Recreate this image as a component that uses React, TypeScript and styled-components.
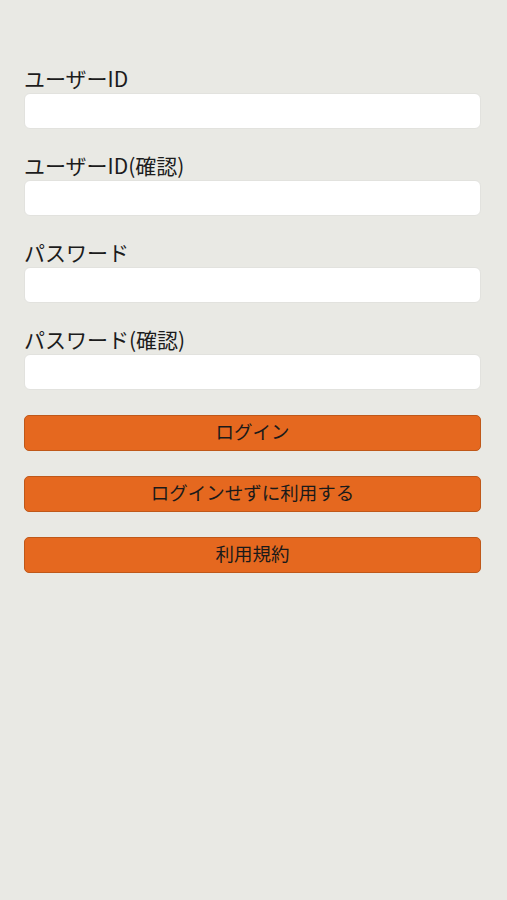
import styled, { createGlobalStyle } from "styled-components";

const GlobalStyle = createGlobalStyle`
  html, body {
    margin: 0;
    padding: 0;
    background: #e9e9e4;
  }
  body {
    font-family: "Noto Sans CJK JP", "Noto Sans", sans-serif;
    color: #1a1a1a;
  }
`;

const fields = ["ユーザーID", "ユーザーID(確認)", "パスワード", "パスワード(確認)"];
const buttons = ["ログイン", "ログインせずに利用する", "利用規約"];

const App = () => {
  return (
    <>
      <GlobalStyle />
      <Page>
        {fields.map((label) => (
          <Field key={label}>
            <Label>{label}</Label>
            <Input type={label.startsWith("パス") ? "password" : "text"} />
          </Field>
        ))}
        <Buttons>
          {buttons.map((b) => (
            <Button key={b}>{b}</Button>
          ))}
        </Buttons>
      </Page>
    </>
  );
};

const Page = styled.div`
  min-height: 900px;
  box-sizing: border-box;
  padding: 67px 26px 0 24px;
  display: flex;
  flex-direction: column;
`;

const Field = styled.label`
  display: flex;
  flex-direction: column;
  margin-bottom: 25px;
`;

const Label = styled.span`
  font-size: 21px;
  line-height: 22px;
  margin-bottom: 4px;
  color: #1c1c1c;
`;

const Input = styled.input`
  box-sizing: border-box;
  height: 36px;
  width: 100%;
  border: 1px solid #e2e2de;
  border-radius: 6px;
  background: #ffffff;
  padding: 0 10px;
  font-size: 18px;
  outline: none;
`;

const Buttons = styled.div`
  display: flex;
  flex-direction: column;
  gap: 25px;
`;

const Button = styled.button`
  box-sizing: border-box;
  height: 36px;
  width: 100%;
  background: #e5681f;
  border: 1px solid #bf5819;
  border-radius: 5px;
  font-family: "Noto Sans CJK JP", "Noto Sans", sans-serif;
  font-size: 18.5px;
  line-height: 1;
  color: #1a1a1a;
  cursor: pointer;
  padding: 0 0 3px;
`;

export default App;
